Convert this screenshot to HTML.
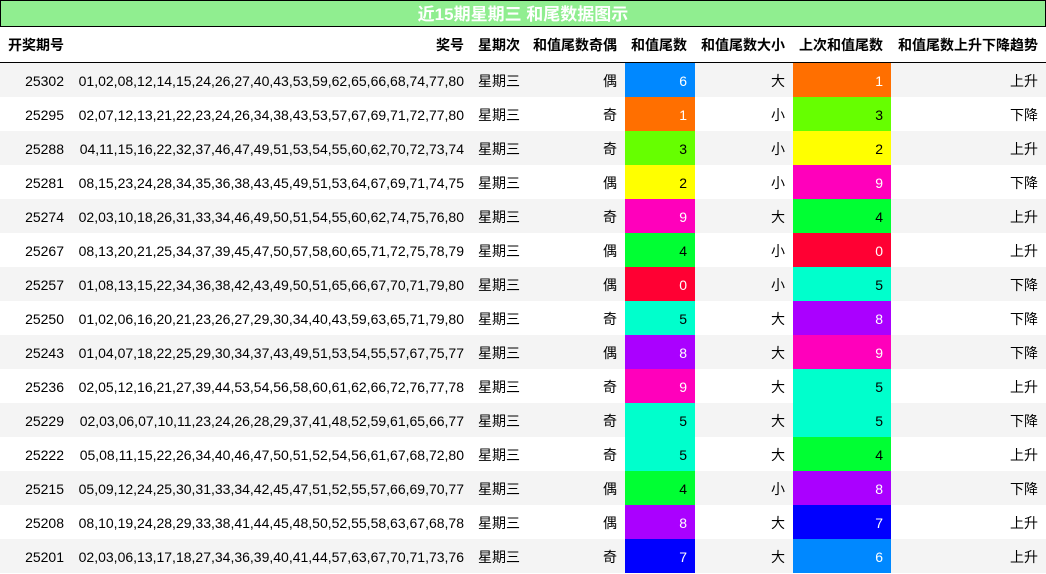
<!DOCTYPE html><html><head><meta charset="utf-8"><style>
body{margin:0;background:#fff;font-family:"Liberation Sans","Noto Sans CJK SC",sans-serif;font-size:14px;color:#000}
.t{position:absolute;left:0;top:0;width:1044px;height:25px;background:#90EE90;border:1px solid #000;color:#fff;font-weight:bold;font-size:17px;text-align:center;line-height:27px}
table{position:absolute;left:0;top:27px;border-collapse:collapse;table-layout:fixed;width:1046px}
th{height:35px;font-weight:bold;text-align:right;padding:0 8px 0 0;border-bottom:1px solid #000;font-size:14px}
td{height:34px;padding:2px 8px 0 0;box-sizing:border-box;text-align:right;white-space:nowrap}
tr:nth-child(odd) td{background:#f4f4f4}
th:first-child{text-align:left;padding-left:8px}
td:first-child{padding-right:8px}
.w{color:#fff}
</style></head><body>
<div class="t">近15期星期三 和尾数据图示</div>
<table>
<colgroup><col style="width:72px"><col style="width:400px"><col style="width:56px"><col style="width:97px"><col style="width:70px"><col style="width:98px"><col style="width:98px"><col style="width:155px"></colgroup>
<tr><th>开奖期号</th><th>奖号</th><th>星期次</th><th>和值尾数奇偶</th><th>和值尾数</th><th>和值尾数大小</th><th>上次和值尾数</th><th>和值尾数上升下降趋势</th></tr>
<tbody id="b"></tbody></table>
<script>
var d=[["25302","01,02,08,12,14,15,24,26,27,40,43,53,59,62,65,66,68,74,77,80","偶",6,"大",1,"上升"],
["25295","02,07,12,13,21,22,23,24,26,34,38,43,53,57,67,69,71,72,77,80","奇",1,"小",3,"下降"],
["25288","04,11,15,16,22,32,37,46,47,49,51,53,54,55,60,62,70,72,73,74","奇",3,"小",2,"上升"],
["25281","08,15,23,24,28,34,35,36,38,43,45,49,51,53,64,67,69,71,74,75","偶",2,"小",9,"下降"],
["25274","02,03,10,18,26,31,33,34,46,49,50,51,54,55,60,62,74,75,76,80","奇",9,"大",4,"上升"],
["25267","08,13,20,21,25,34,37,39,45,47,50,57,58,60,65,71,72,75,78,79","偶",4,"小",0,"上升"],
["25257","01,08,13,15,22,34,36,38,42,43,49,50,51,65,66,67,70,71,79,80","偶",0,"小",5,"下降"],
["25250","01,02,06,16,20,21,23,26,27,29,30,34,40,43,59,63,65,71,79,80","奇",5,"大",8,"下降"],
["25243","01,04,07,18,22,25,29,30,34,37,43,49,51,53,54,55,57,67,75,77","偶",8,"大",9,"下降"],
["25236","02,05,12,16,21,27,39,44,53,54,56,58,60,61,62,66,72,76,77,78","奇",9,"大",5,"上升"],
["25229","02,03,06,07,10,11,23,24,26,28,29,37,41,48,52,59,61,65,66,77","奇",5,"大",5,"下降"],
["25222","05,08,11,15,22,26,34,40,46,47,50,51,52,54,56,61,67,68,72,80","奇",5,"大",4,"上升"],
["25215","05,09,12,24,25,30,31,33,34,42,45,47,51,52,55,57,66,69,70,77","偶",4,"小",8,"下降"],
["25208","08,10,19,24,28,29,33,38,41,44,45,48,50,52,55,58,63,67,68,78","偶",8,"大",7,"上升"],
["25201","02,03,06,13,17,18,27,34,36,39,40,41,44,57,63,67,70,71,73,76","奇",7,"大",6,"上升"]];
var c=["#ff0033","#ff6f00","#ffff00","#66ff00","#00ff33","#00ffcc","#0088ff","#0000ff","#aa00ff","#ff00bb"],wh=[1,1,0,0,0,0,1,1,1,1];
function cell(n){return '<td style="background:'+c[n]+'" class="'+(wh[n]?'w':'')+'">'+n+'</td>'}
var h='';d.forEach(function(r){h+='<tr><td>'+r[0]+'</td><td>'+r[1]+'</td><td>星期三</td><td>'+r[2]+'</td>'+cell(r[3])+'<td>'+r[4]+'</td>'+cell(r[5])+'<td>'+r[6]+'</td></tr>'});
document.getElementById('b').innerHTML=h;
</script>
</body></html>
